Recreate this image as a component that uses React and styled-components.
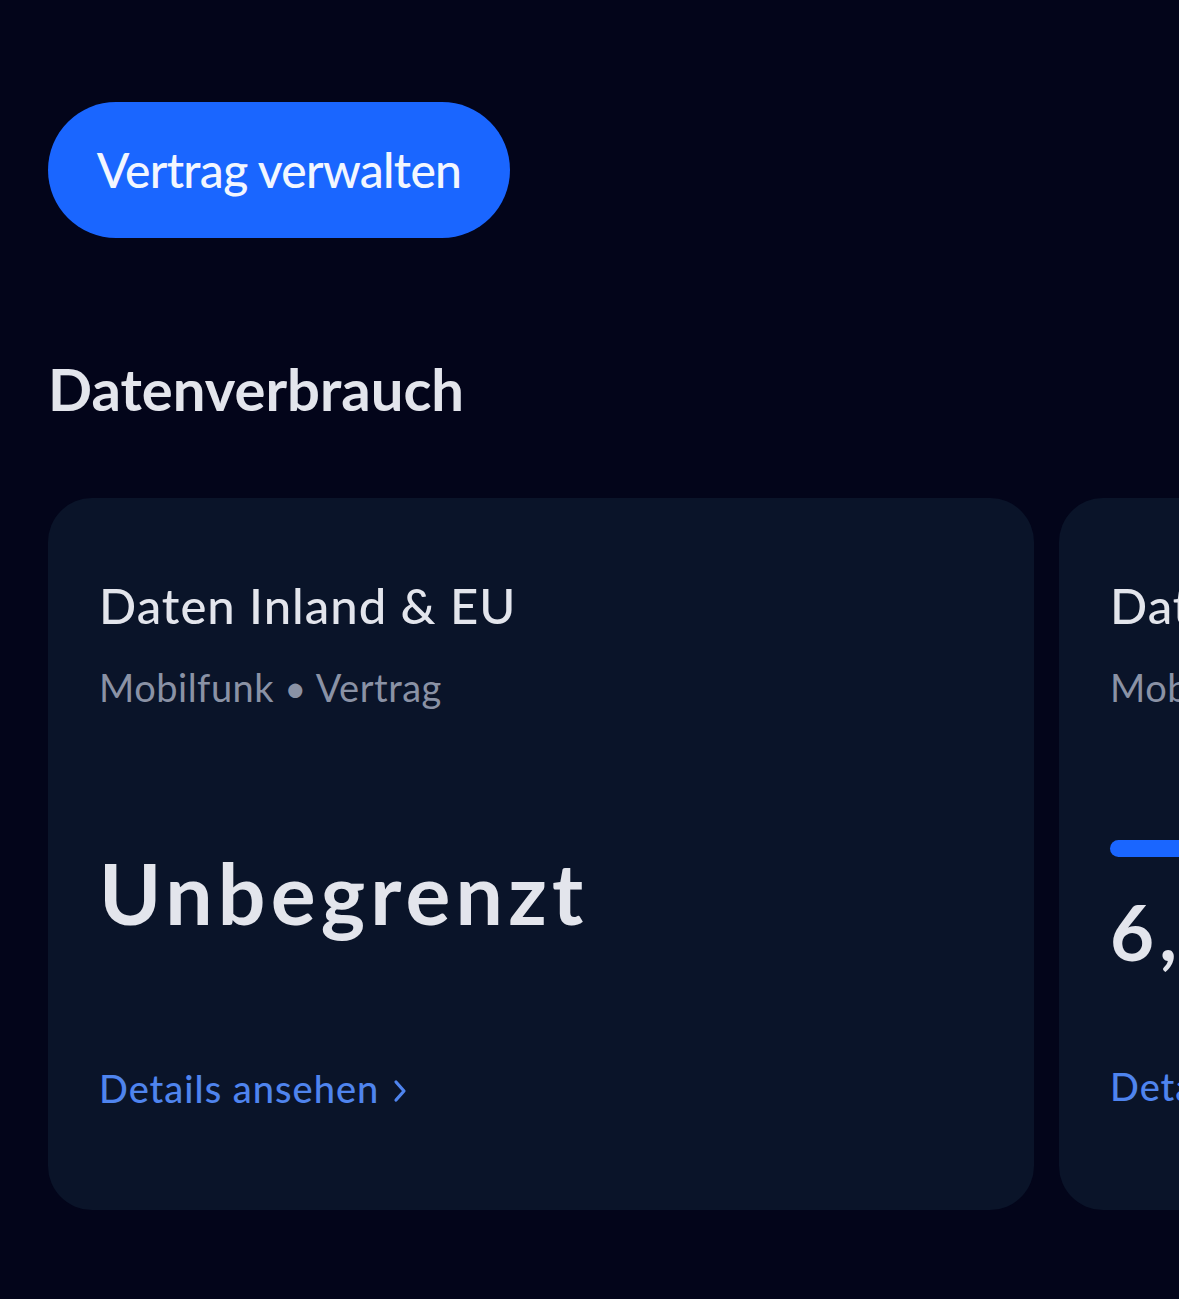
import React from "react";
import styled, { createGlobalStyle } from "styled-components";

const Global = createGlobalStyle`
  html, body { margin: 0; padding: 0; background: #03051a; }
  body { font-family: Lato, "Open Sans", sans-serif; color: #e3e5ec; overflow: hidden; }
  #root { width: 1179px; height: 1299px; overflow: hidden; }
`;

const Page = styled.main`
  padding: 102px 0 0 48px;
  display: flex;
  flex-direction: column;
  align-items: flex-start;
`;

const PrimaryButton = styled.button`
  height: 136px;
  width: 462px;
  padding: 0;
  border: none;
  border-radius: 68px;
  background: #1a66ff;
  color: #f2f6ff;
  font-family: inherit;
  font-size: 48px;
  font-weight: 500;
  letter-spacing: -0.7px;
  line-height: 1;
  cursor: pointer;
`;

const SectionTitle = styled.h2`
  margin: 116px 0 0 0;
  font-size: 58px;
  line-height: 1.2;
  font-weight: 700;
  color: #e3e5ec;
`;

const Carousel = styled.div`
  margin-top: 74px;
  display: flex;
  gap: 25px;
  width: calc(100vw - 48px);
  overflow: hidden;
`;

const Card = styled.section`
  flex: 0 0 986px;
  height: 712px;
  box-sizing: border-box;
  padding: 78px 51px 0 51px;
  background: #0a1429;
  border-radius: 44px;
  display: flex;
  flex-direction: column;
`;

const CardTitle = styled.h3`
  margin: 0;
  font-size: 49px;
  line-height: 1.2;
  font-weight: 500;
  letter-spacing: 1px;
  color: #e3e5ec;
  white-space: nowrap;
`;

const CardSub = styled.p`
  margin: 31px 0 0;
  font-size: 38px;
  line-height: 1.2;
  font-weight: 400;
  letter-spacing: 0.5px;
  color: #8a92a5;
  white-space: nowrap;
`;

const Progress = styled.div`
  margin-top: 129px;
  height: 17px;
  border-radius: 9px;
  background: #1a66ff;
  width: ${(p) => p.$pct}%;
`;

const Value = styled.div`
  margin-top: ${(p) => p.$gap}px;
  font-size: ${(p) => p.$size}px;
  line-height: 1.2;
  font-weight: 700;
  letter-spacing: 5.2px;
  color: #e3e5ec;
  white-space: nowrap;
`;

const DetailsLink = styled.a`
  margin-top: ${(p) => p.$gap}px;
  display: inline-flex;
  align-items: center;
  gap: 14px;
  font-size: 38px;
  line-height: 1.2;
  font-weight: 500;
  letter-spacing: 1px;
  color: #4f84ee;
  text-decoration: none;
  white-space: nowrap;
  svg { margin-top: 4px; }
`;

const Chevron = () => (
  <svg width="14" height="24" viewBox="0 0 14 24" fill="none">
    <path d="M3 3 L11 12 L3 21" stroke="#4f84ee" strokeWidth="3.2" strokeLinecap="round" strokeLinejoin="round" />
  </svg>
);

export default function App() {
  return (
    <>
      <Global />
      <Page>
        <PrimaryButton>Vertrag verwalten</PrimaryButton>
        <SectionTitle>Datenverbrauch</SectionTitle>
        <Carousel>
          <Card>
            <CardTitle>Daten Inland &amp; EU</CardTitle>
            <CardSub>Mobilfunk • Vertrag</CardSub>
            <Value $gap={132} $size={84}>Unbegrenzt</Value>
            <DetailsLink href="#" $gap={122}>
              Details ansehen <Chevron />
            </DetailsLink>
          </Card>
          <Card>
            <CardTitle>Daten Roaming</CardTitle>
            <CardSub>Mobilfunk • Vertrag</CardSub>
            <Progress $pct={62} />
            <Value $gap={29} $size={76}>6,4 GB</Value>
            <DetailsLink href="#" $gap={87}>
              Details ansehen <Chevron />
            </DetailsLink>
          </Card>
        </Carousel>
      </Page>
    </>
  );
}
